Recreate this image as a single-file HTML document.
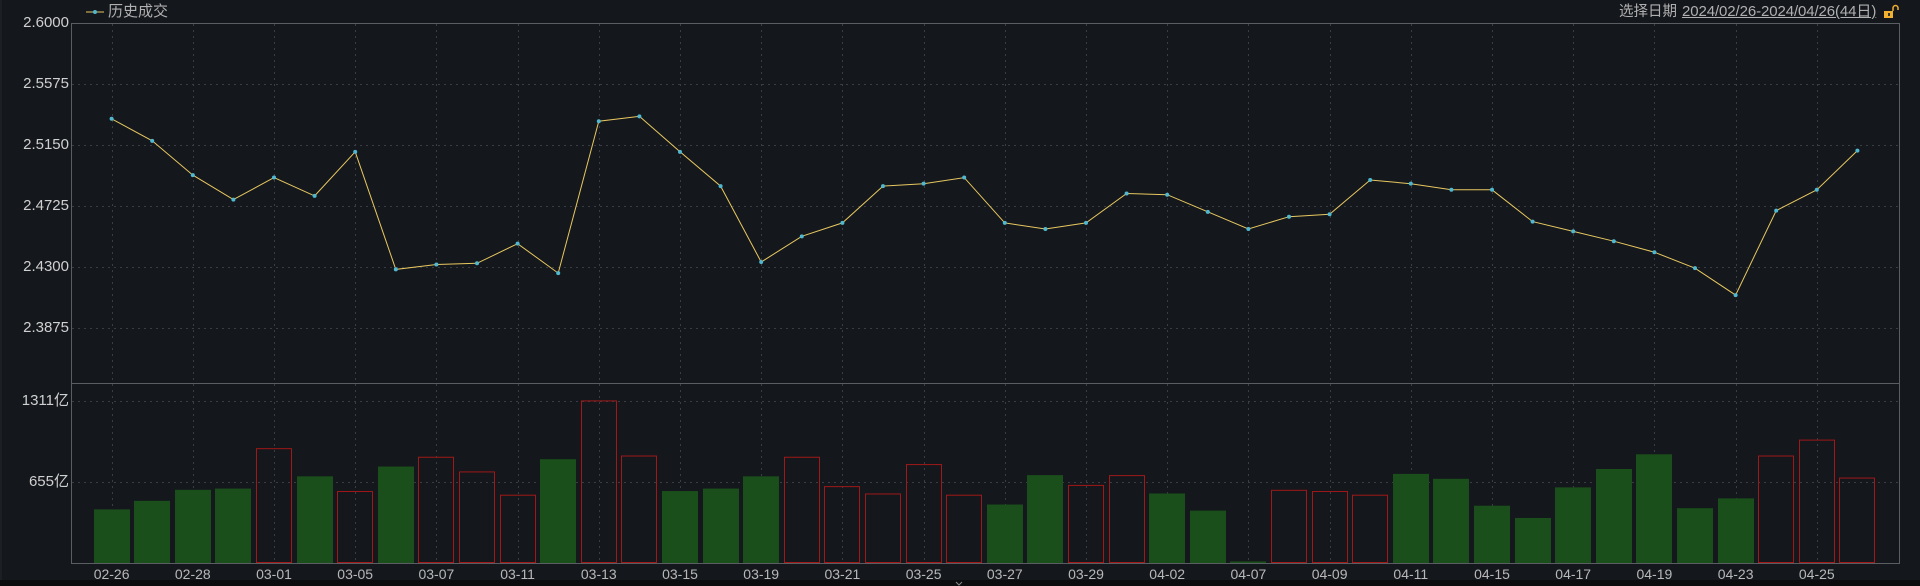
<!DOCTYPE html>
<html><head><meta charset="utf-8"><style>
html,body{margin:0;padding:0;background:#14171c;width:1920px;height:586px;overflow:hidden;font-family:"Liberation Sans","Noto Sans CJK SC",sans-serif}
.t{position:absolute;color:#c8c8c8;font-size:15px;line-height:16px;white-space:nowrap}
.yl{position:absolute;right:1851px;color:#d0d0d0;font-size:15px;line-height:16px;text-align:right;white-space:nowrap}
.xl{position:absolute;top:566px;color:#b8b8b8;font-size:14px;width:60px;text-align:center;margin-left:-30px}
</style></head><body>
<svg id="s" width="1920" height="586" style="position:absolute;left:0;top:0">
<rect x="0" y="580" width="1920" height="6" fill="#0b0c0e"/>
<line x1="1" y1="0" x2="1" y2="580" stroke="#24272c"/>
<g id="grid" stroke="#3a3d43" stroke-dasharray="2,4"></g>
<g id="bars"></g>
<rect x="71.5" y="23.5" width="1828" height="540" fill="none" stroke="#5a5d62"/>
<line x1="71" y1="383.5" x2="1900" y2="383.5" stroke="#5a5d62"/>
<polyline id="pl" fill="none" stroke="#e8c860" stroke-width="1"/>
<g id="pts" fill="#4fb8d0"></g>
<line x1="86" y1="12" x2="104" y2="12" stroke="#e8c860"/>
<circle cx="95" cy="12" r="2" fill="#4fb8d0"/>
<rect x="1884" y="11" width="9" height="7" fill="#f0b030"/>
<rect x="1888" y="13" width="2" height="3" fill="#333"/>
<path d="M1893 11 V8 a2.5 2.5 0 0 1 5 0 V10" fill="none" stroke="#f0b030" stroke-width="1.5"/>
<path d="M956 582 l3 3 l3 -3" fill="none" stroke="#888" stroke-width="1"/>
</svg>
<div class="t" style="left:108px;top:4px;font-size:15px;color:#b0b0b0">历史成交</div>
<div class="t" style="left:1619px;top:4px;font-size:14.5px;color:#b0b0b0">选择日期</div>
<div class="t" style="left:1682px;top:4px;font-size:15px;color:#b0b0b0;text-decoration:underline;letter-spacing:-0.1px">2024/02/26-2024/04/26(44日)</div>
<div class="yl" style="top:15px">2.6000</div>
<div class="yl" style="top:76px">2.5575</div>
<div class="yl" style="top:137px">2.5150</div>
<div class="yl" style="top:198px">2.4725</div>
<div class="yl" style="top:259px">2.4300</div>
<div class="yl" style="top:320px">2.3875</div>
<div class="yl" style="top:393px">1311亿</div>
<div class="yl" style="top:474px">655亿</div>
<div class="xl" style="left:111.6px">02-26</div>
<div class="xl" style="left:192.8px">02-28</div>
<div class="xl" style="left:274px">03-01</div>
<div class="xl" style="left:355.2px">03-05</div>
<div class="xl" style="left:436.4px">03-07</div>
<div class="xl" style="left:517.6px">03-11</div>
<div class="xl" style="left:598.8px">03-13</div>
<div class="xl" style="left:680px">03-15</div>
<div class="xl" style="left:761.2px">03-19</div>
<div class="xl" style="left:842.4px">03-21</div>
<div class="xl" style="left:923.6px">03-25</div>
<div class="xl" style="left:1004.8px">03-27</div>
<div class="xl" style="left:1086px">03-29</div>
<div class="xl" style="left:1167.2px">04-02</div>
<div class="xl" style="left:1248.4px">04-07</div>
<div class="xl" style="left:1329.6px">04-09</div>
<div class="xl" style="left:1410.8px">04-11</div>
<div class="xl" style="left:1492px">04-15</div>
<div class="xl" style="left:1573.2px">04-17</div>
<div class="xl" style="left:1654.4px">04-19</div>
<div class="xl" style="left:1735.6px">04-23</div>
<div class="xl" style="left:1816.8px">04-25</div>
<script>
var NS="http://www.w3.org/2000/svg";
function el(t,a,p){var e=document.createElementNS(NS,t);for(var k in a)e.setAttribute(k,a[k]);document.getElementById(p).appendChild(e);}
var P=40.6;
for(var i=0;i<44;i+=2){var x=Math.round(71+P*(i+1))+0.5;el('line',{x1:x,y1:24,x2:x,y2:563},'grid');}
[84,145,206,267,328,401,482].forEach(function(y){el('line',{x1:72,y1:y+0.5,x2:1899,y2:y+0.5},'grid');});
var ly=[97,115,143,163,145,160,124,220,216,215,199,223,99,95,124,152,214,193,182,152,150,145,182,187,182,158,159,173,187,177,175,147,150,155,155,181,189,197,206,219,241,172,155,123];
var pts=[];
ly.forEach(function(y,i){var x=71+P*(i+1),yy=y*1.2245;pts.push(x.toFixed(1)+','+yy.toFixed(1));el('circle',{cx:x,cy:yy,r:2},'pts');});
document.getElementById('pl').setAttribute('points',pts.join(' '));
var vb=[[416,'G'],[409,'G'],[400,'G'],[399,'G'],[366,'R'],[389,'G'],[401,'R'],[381,'G'],[373,'R'],[385,'R'],[404,'R'],[375,'G'],[327,'R'],[372,'R'],[401,'G'],[399,'G'],[389,'G'],[373,'R'],[397,'R'],[403,'R'],[379,'R'],[404,'R'],[412,'G'],[388,'G'],[396,'R'],[388,'R'],[403,'G'],[417,'G'],[458.5,'G'],[400,'R'],[401,'R'],[404,'R'],[387,'G'],[391,'G'],[413,'G'],[423,'G'],[398,'G'],[383,'G'],[371,'G'],[415,'G'],[407,'G'],[372,'R'],[359,'R'],[390,'R']];
vb.forEach(function(b,i){var c=71+P*(i+1),top=b[0]*1.2245,x=Math.round(c-18);
if(b[1]=='G')el('rect',{x:x,y:top,width:36,height:563-top,fill:'#1a4e1a'},'bars');
else el('rect',{x:x+0.5,y:top+0.5,width:35,height:562-top,fill:'none',stroke:'#a01818'},'bars');});
</script>
</body></html>
